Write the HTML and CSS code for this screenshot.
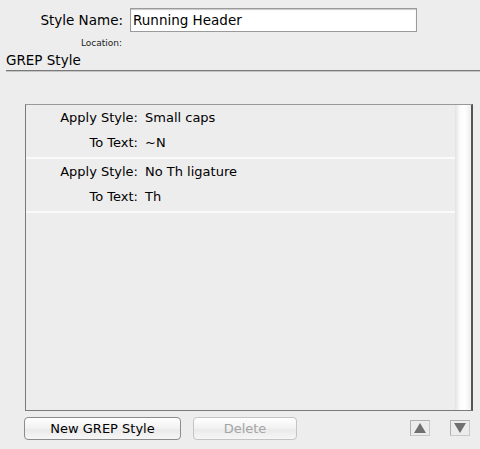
FILE: index.html
```html
<!DOCTYPE html>
<html lang="en">
<head>
    <meta charset="UTF-8">
    <title>GREP Style</title>
    <link rel="stylesheet" href="styles.css">
</head>
<body>
    <div class="nameRow">
        <label class="nameLabel" for="styleName">Style Name:</label>
        <input type="text" id="styleName" class="nameInput" value="Running Header">
    </div>
    <div class="location">Location:</div>
    <h2 class="sectionTitle">GREP Style</h2>

    <div class="grepList">
        <ul class="rules">
            <li class="rule">
                <span class="ruleLabel">Apply Style:</span><span class="ruleValue">Small caps</span>
                <span class="ruleLabel">To Text:</span><span class="ruleValue">~N</span>
            </li>
            <li class="rule">
                <span class="ruleLabel">Apply Style:</span><span class="ruleValue">No Th ligature</span>
                <span class="ruleLabel">To Text:</span><span class="ruleValue">Th</span>
            </li>
        </ul>
        <div class="scrollbar"></div>
    </div>

    <div class="buttons">
        <button type="button" class="btn btnNew">New GREP Style</button>
        <button type="button" class="btn btnDelete" disabled>Delete</button>
        <span class="spacer"></span>
        <button type="button" class="arrow arrowUp"><span class="triUp"></span></button>
        <button type="button" class="arrow arrowDown"><span class="triDown"></span></button>
    </div>
</body>
</html>
```

FILE: styles.css
```css
/* Base */
body {
    margin: 0;
    background-color: #ededed;
    font-family: "DejaVu Sans", "Liberation Sans", sans-serif;
    font-size: 13px;
    color: #000;
}

/* Nome do estilo */
.nameRow {
    display: flex;
    align-items: center;
    padding-top: 8px;
}

.nameLabel {
    width: 130px;
    text-align: right;
    padding-right: 7px;
    box-sizing: border-box;
    font-size: 13.5px;
}

.nameInput {
    width: 287px;
    height: 24px;
    box-sizing: border-box;
    border: 1px solid #9a9a9a;
    box-shadow: inset 0 1px 1px #c8c8c8;
    font-family: inherit;
    font-size: 13.5px;
    padding: 0 0 0 2px;
    margin: 0;
    outline: none;
    background: #fff;
}

.location {
    font-size: 9px;
    padding-left: 81px;
    margin-top: 6px;
    color: #222;
}

.sectionTitle {
    font-size: 13.5px;
    font-weight: normal;
    margin: 4px 0 0 6px;
    padding: 0 0 2px 0;
    border-bottom: 1px solid #7a7a7a;
    box-shadow: 0 1px 0 #c4c4c4;
    line-height: 16px;
}

/* Lista de regras */
.grepList {
    display: flex;
    margin: 33px 0 0 25px;
    width: 448px;
    height: 307px;
    box-sizing: border-box;
    border: 1px solid #7a7a7a;
    border-top-color: #999;
    border-right: 2px solid #555;
}

.rules {
    list-style-type: none;
    margin: 0;
    padding: 0;
    flex: 1;
}

.rule {
    display: grid;
    grid-template-columns: 112px auto;
    column-gap: 7px;
    row-gap: 8px;
    padding: 4px 0 6px 0;
    border-bottom: 2px solid #fafafa;
    line-height: 17px;
}

.ruleLabel {
    text-align: right;
}

.scrollbar {
    width: 16px;
    background: linear-gradient(to right, #e2e2e2, #fbfbfb 30%, #fff 60%, #eeeeee);
}

/* Botões */
.buttons {
    display: flex;
    align-items: flex-start;
    margin: 6px 0 0 24px;
    width: 446px;
}

.btn {
    height: 23px;
    border: 1px solid #8c8c8c;
    border-radius: 4px;
    background: linear-gradient(#ffffff, #f1f1f1 50%, #e9e9e9 51%, #f6f6f6);
    font-family: inherit;
    font-size: 13px;
    color: #000;
    padding: 0;
}

.btnNew {
    width: 157px;
}

.btnDelete {
    width: 104px;
    margin-left: 12px;
    border-color: #c4c4c4;
    color: #a4a4a4;
}

.spacer {
    flex: 1;
}

.arrow {
    width: 20px;
    height: 16px;
    margin-top: 3px;
    padding: 0;
    border: 1px solid #c9c9c9;
    border-top-color: #b0b0b0;
    border-left-color: #b0b0b0;
    background: #ececec;
    display: flex;
    align-items: center;
    justify-content: center;
}

.arrowDown {
    margin-left: 20px;
}

.triUp {
    width: 0;
    height: 0;
    border-left: 6px solid transparent;
    border-right: 6px solid transparent;
    border-bottom: 10px solid #707070;
}

.triDown {
    width: 0;
    height: 0;
    border-left: 6px solid transparent;
    border-right: 6px solid transparent;
    border-top: 10px solid #707070;
}
```
